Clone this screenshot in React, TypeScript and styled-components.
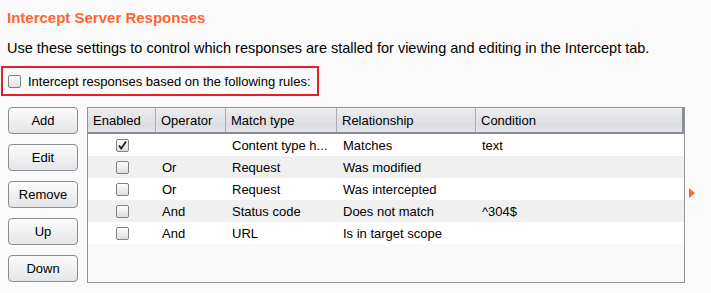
import React from "react";
import styled, {createGlobalStyle, css} from "styled-components";

const Global = createGlobalStyle`
    html, body {
        margin: 0;
        padding: 0;
        background: #fafafa;
    }
    body {
        font-family: "Liberation Sans", Arial, sans-serif;
        font-size: 13px;
        color: #000;
    }
`;

const Page = styled.div`
    width: 711px;
    height: 293px;
    padding: 9px 0 0 7px;
    box-sizing: border-box;
    overflow: hidden;
    position: relative;
`;
const Title = styled.h1`
    margin: 0;
    font-size: 15px;
    font-weight: bold;
    color: #ff6633;
    line-height: 18px;
`;
const Description = styled.p`
    margin: 13px 0 0;
    font-size: 14.5px;
    line-height: 17px;
`;
const RuleBox = styled.label`
    display: flex;
    align-items: center;
    gap: 7px;
    width: 318px;
    height: 30px;
    margin: 9px 0 0 -6px;
    padding-left: 5px;
    box-sizing: border-box;
    border: 2px solid #e3202a;
`;
const boxLook = css`
    width: 13px;
    height: 13px;
    box-sizing: border-box;
    border: 1px solid #7d8289;
    border-radius: 2px;
    background: linear-gradient(#fdfdfd, #dedfe3);
    display: flex;
    align-items: center;
    justify-content: center;
    flex: none;
`;
const Box = styled.span`
    ${boxLook};
`;
const Body = styled.div`
    display: flex;
    gap: 9px;
    margin-top: 11px;
    margin-left: 1px;
`;
const Buttons = styled.div`
    display: flex;
    flex-direction: column;
    gap: 10px;
    width: 70px;
`;
const Button = styled.button`
    height: 27px;
    border: 1px solid #8a8d93;
    border-radius: 4px;
    background: linear-gradient(#fbfbfb, #e4e5e8);
    font-family: inherit;
    font-size: 13px;
    color: #000;
    padding: 0;
`;
const Table = styled.div`
    width: 598px;
    height: 176px;
    border: 1px solid #8f939a;
    background: #f9f9f9;
    box-sizing: border-box;
`;
const cols = "68px 70px 111px 139px 1fr";
const HeadRow = styled.div`
    display: grid;
    grid-template-columns: ${cols};
    height: 26px;
    background: linear-gradient(#eeeef0, #dcdde2 70%, #e4e5ea);
    border-bottom: 2px solid #8a8d93;
    box-sizing: border-box;
`;
const HeadCell = styled.div`
    display: flex;
    align-items: center;
    padding-left: 5px;
    border-right: 1px solid #a9acb2;
    &:last-child {
        border-right: 2px solid #8a8d93;
    }
`;
const Row = styled.div<{ $alt: boolean }>`
    display: grid;
    grid-template-columns: ${cols};
    height: 22px;
    background: ${p => (p.$alt ? "#f0f0f0" : "#fff")};
`;
const Cell = styled.div<{ $center?: boolean }>`
    display: flex;
    align-items: center;
    padding-left: ${p => (p.$center ? "0" : "6px")};
    justify-content: ${p => (p.$center ? "center" : "flex-start")};
    white-space: nowrap;
    overflow: hidden;
`;
const Arrow = styled.div`
    position: absolute;
    left: 689px;
    top: 188px;
    width: 0;
    height: 0;
    border-top: 5px solid transparent;
    border-bottom: 5px solid transparent;
    border-left: 6px solid #ff6633;
`;

const rules = [
    {enabled: true, op: "", match: "Content type h...", rel: "Matches", cond: "text"},
    {enabled: false, op: "Or", match: "Request", rel: "Was modified", cond: ""},
    {enabled: false, op: "Or", match: "Request", rel: "Was intercepted", cond: ""},
    {enabled: false, op: "And", match: "Status code", rel: "Does not match", cond: "^304$"},
    {enabled: false, op: "And", match: "URL", rel: "Is in target scope", cond: ""},
];

function Check({checked}: { checked: boolean }) {
    return (
        <Box>
            {checked && (
                <svg width="11" height="11" viewBox="0 0 11 11">
                    <path d="M2 5.5 L4.3 8.5 L9 1.5" fill="none" stroke="#1b1e24" strokeWidth="1.8"/>
                </svg>
            )}
        </Box>
    );
}

export default function App() {
    return (
        <Page>
            <Global/>
            <Title>Intercept Server Responses</Title>
            <Description>
                Use these settings to control which responses are stalled for viewing and editing in the Intercept tab.
            </Description>
            <RuleBox>
                <Check checked={false}/>
                Intercept responses based on the following rules:
            </RuleBox>
            <Body>
                <Buttons>
                    {["Add", "Edit", "Remove", "Up", "Down"].map(b => <Button key={b}>{b}</Button>)}
                </Buttons>
                <Table>
                    <HeadRow>
                        {["Enabled", "Operator", "Match type", "Relationship", "Condition"].map(h =>
                            <HeadCell key={h}>{h}</HeadCell>)}
                    </HeadRow>
                    {rules.map((r, i) => (
                        <Row key={i} $alt={i % 2 === 1}>
                            <Cell $center><Check checked={r.enabled}/></Cell>
                            <Cell>{r.op}</Cell>
                            <Cell>{r.match}</Cell>
                            <Cell>{r.rel}</Cell>
                            <Cell>{r.cond}</Cell>
                        </Row>
                    ))}
                </Table>
            </Body>
            <Arrow/>
        </Page>
    );
}
